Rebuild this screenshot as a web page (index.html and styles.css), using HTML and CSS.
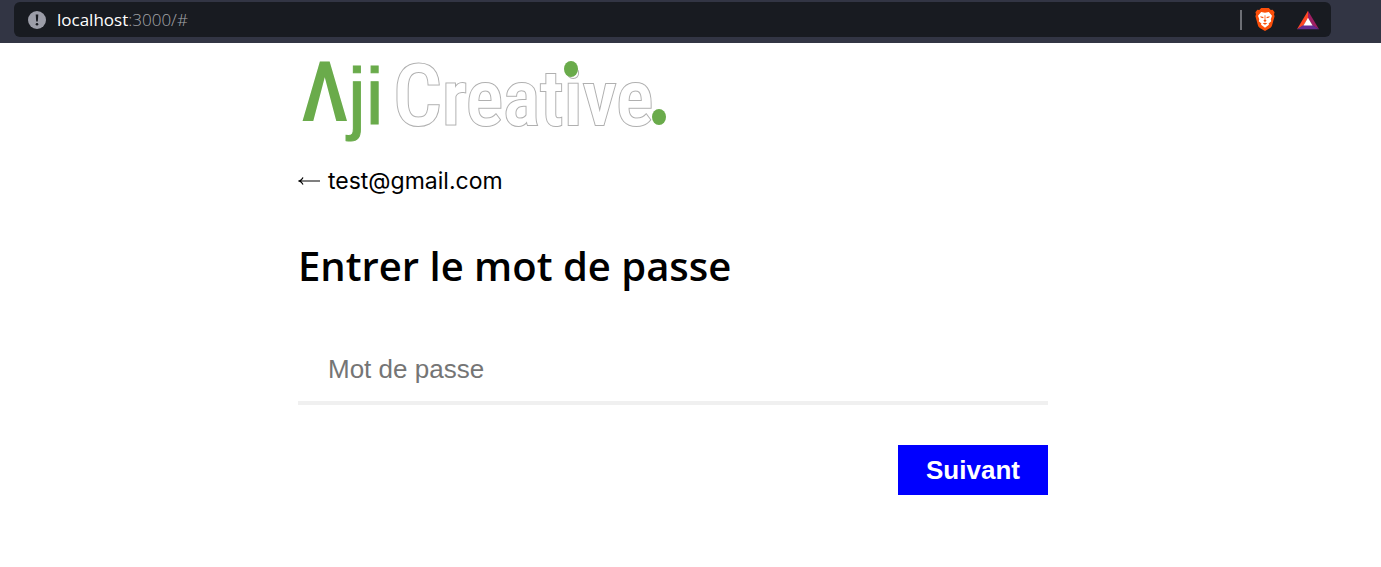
FILE: index.html
```html
<!DOCTYPE html>
<html lang="fr">
<head>
<meta charset="utf-8">
<meta name="viewport" content="width=device-width, initial-scale=1">
<title>Aji Creative</title>
<link rel="stylesheet" href="styles.css">
</head>
<body>
<header class="browser">
  <div class="address">
    <svg class="info" viewBox="0 0 18 18" aria-hidden="true"><circle cx="9" cy="9" r="9" fill="#9b9da8"/><path d="M7.700 3.500h2.600l-.5 7H8.200z" fill="#181b21"/><circle cx="9" cy="13.300" r="1.300" fill="#181b21"/></svg>
    <span class="url"><span class="host">localhost</span>:3000/#</span>
    <span class="divider"></span>
    <svg class="lion" viewBox="0 0 20 24" aria-hidden="true">
      <path d="M6 0h8l2 2 2-.2 2 2.700-.6 2 .6 2-2.600 9.600c-.4 1.400-1 2-2 2.700L10 24l-5.400-3.200c-1-.7-1.600-1.300-2-2.700L0 8.500l.6-2-.6-2 2-2.700L4 2z" fill="#fb4f0a"/>
      <path d="M6 4.200 10 5l4-.8 3.300 4-1.300 3.600.5 2-2.700 2.300.3 1.300L10 20.500l-4.100-3.100.3-1.300-2.700-2.300.5-2L2.700 8.200z" fill="#fff"/>
      <path d="m5 8.500 3.500.8-.4 1.300-2.500-.7zm10 0-3.500.8.4 1.300 2.500-.7zM9.600 7.500h.8v4.600l1.300 1.300-1.700 1.100-1.700-1.100 1.300-1.300zM7.500 16l2.500-.7 2.500.7-2.500 1.500z" fill="#fb4f0a"/>
    </svg>
    <svg class="bat" viewBox="0 0 24 20" aria-hidden="true">
      <path d="M12 0v8l-5 8-7 4z" fill="#ff4724"/><path d="M12 0v8l5 8 7 4z" fill="#9e1f63"/><path d="m0 20 7-4.500h10L24 20z" fill="#662d91"/><path d="m12 7.500 5 8.500H7z" fill="#fff"/>
    </svg>
  </div>
</header>
<main class="login">
  <svg class="logo" viewBox="0 0 370 90" role="img" aria-label="Aji Creative.">
    <text class="logo-green logo-peak" x="3" y="71">Λ</text>
    <text class="logo-green logo-ji" x="50" y="74">ji</text>
    <text class="logo-outline" x="95" y="75"><tspan class="logo-cap">C</tspan>reative</text>
    <ellipse cx="273" cy="19" rx="7" ry="8" fill="#6aab4b"/>
    <ellipse cx="361" cy="67" rx="7" ry="8" fill="#6aab4b"/>
  </svg>
  <a class="back" href="#">
    <svg class="arrow" viewBox="0 0 22 10" aria-hidden="true"><path d="M22 5H1M5 1.500Q4 4 1 5q3 1 4 3.500" fill="none" stroke="#000" stroke-width="1.200"/></svg>
    <span>test@gmail.com</span>
  </a>
  <h1 class="title">Entrer le mot de passe</h1>
  <form class="form">
    <input class="field" type="password" placeholder="Mot de passe" aria-label="Mot de passe">
    <button class="next" type="button">Suivant</button>
  </form>
</main>
</body>
</html>
```
FILE: styles.css
```css
* { box-sizing: border-box; }
body { margin: 0; background: #fff; color: #000; font-family: "Open Sans", sans-serif; }
.browser { background: #323544; padding: 2px 50px 6px 14px; }
.address { display: flex; align-items: center; height: 35px; padding: 0 12px 0 14px; background: #181b21; border-radius: 6px; }
.info { width: 18px; height: 18px; margin-right: 11px; }
.url { flex: 1; font-size: 17px; font-weight: 300; line-height: 24px; color: #a4a6aa; }
.host { color: #fff; font-weight: 400; }
.divider { width: 2px; height: 20px; background: #6d6f75; margin-right: 13px; }
.lion { width: 20px; height: 23px; margin-right: 22px; }
.bat { width: 22px; height: 20px; }
.login { width: 750px; max-width: 100%; margin: 7px 0 0 298px; }
.logo { display: block; width: 370px; height: 90px; font-family: "Roboto Condensed", "Roboto", sans-serif; font-size: 78px; overflow: visible; }
.logo-green { fill: #6aab4b; }
.logo-peak { font-size: 84px; font-weight: 500; }
.logo-ji { font-family: "Liberation Sans", sans-serif; font-size: 80px; stroke: #6aab4b; stroke-width: 1px; }
.logo-outline { fill: #fff; stroke: #b0b0b0; stroke-width: 2px; paint-order: stroke; font-weight: 500; }
.logo-cap { font-size: 86px; }
.back { display: flex; align-items: center; gap: 8px; margin-top: 25px; color: #000; text-decoration: none; font-family: "Inter", sans-serif; font-size: 23px; line-height: 32px; }
.arrow { width: 22px; height: 10px; }
.title { margin: 41px 0 0; font-size: 40px; font-weight: 600; line-height: 56px; }
.form { display: flex; flex-direction: column; align-items: flex-end; gap: 40px; margin-top: 41px; }
.field { width: 100%; height: 70px; padding: 2px 30px 0; border: 0; border-bottom: 4px solid #f0f0f0; background: #fff; font: 26px "Liberation Sans", sans-serif; }
.field::placeholder { color: #757575; opacity: 1; }
.next { width: 150px; height: 50px; border: 0; background: #00f; color: #fff; font: bold 26px "Liberation Sans", sans-serif; }
```
